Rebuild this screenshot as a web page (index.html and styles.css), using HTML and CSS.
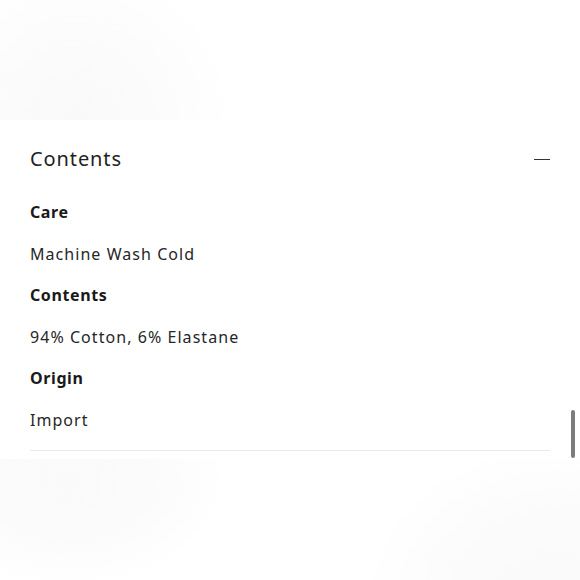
FILE: index.html
```html
<!DOCTYPE html>
<html lang="en">
<head>
<meta charset="utf-8">
<title>Contents</title>
<link rel="stylesheet" href="styles.css">
</head>
<body>
<div class="media media-top"></div>
<section class="accordion">
  <div class="summary">
    <h2 class="summary-title">Contents</h2>
    <span class="minus" aria-hidden="true"></span>
  </div>
  <div class="details">
    <p class="label">Care</p>
    <p class="value">Machine Wash Cold</p>
    <p class="label">Contents</p>
    <p class="value">94% Cotton, 6% Elastane</p>
    <p class="label">Origin</p>
    <p class="value">Import</p>
  </div>
</section>
<div class="media media-bottom"></div>
<div class="scrollbar"></div>
</body>
</html>
```
FILE: styles.css
```css
html, body {
  margin: 0;
  padding: 0;
  background: #ffffff;
  height: 580px;
  overflow: hidden;
}
body {
  font-family: "Noto Sans", "Open Sans", sans-serif;
  color: #1f1f1f;
  position: relative;
}
.media {
  width: 100%;
}
.media-top {
  height: 120px;
  background:
    radial-gradient(circle at 75px 120px, #f9f9f9 0, #fafafa 40px, #fcfcfc 90px, rgba(255,255,255,0) 160px),
    #ffffff;
}
.media-bottom {
  height: 122px;
  margin-top: 8px;
  background:
    radial-gradient(ellipse 160px 110px at 70px 20px, #fafafa 0, #fbfbfb 80px, rgba(255,255,255,0) 160px),
    radial-gradient(ellipse 200px 160px at 560px 140px, #f9f9f9 0, #fbfbfb 100px, rgba(255,255,255,0) 200px),
    #ffffff;
}
.accordion {
  margin: 0 30px;
  border-bottom: 1px solid #e9e9e5;
}
.summary {
  display: flex;
  justify-content: space-between;
  align-items: center;
  padding: 25px 0 27px;
}
.summary-title {
  margin: 0;
  font-size: 20px;
  line-height: 28px;
  font-weight: 400;
  letter-spacing: 0.9px;
  color: #222222;
}
.minus {
  display: block;
  width: 16px;
  height: 1.5px;
  background: #333333;
  margin-top: 1px;
}
.details p {
  margin: 0 0 16px;
  font-size: 16px;
  line-height: 25.6px;
  letter-spacing: 0.6px;
}
.label {
  font-weight: 700;
  color: #1a1a1a;
}
.value {
  font-weight: 400;
  color: #262626;
}
.details .value {
  letter-spacing: 1.05px;
}
.scrollbar {
  position: absolute;
  left: 571px;
  top: 410px;
  width: 4px;
  height: 48px;
  border-radius: 2px;
  background: #7c7c7c;
}
```
